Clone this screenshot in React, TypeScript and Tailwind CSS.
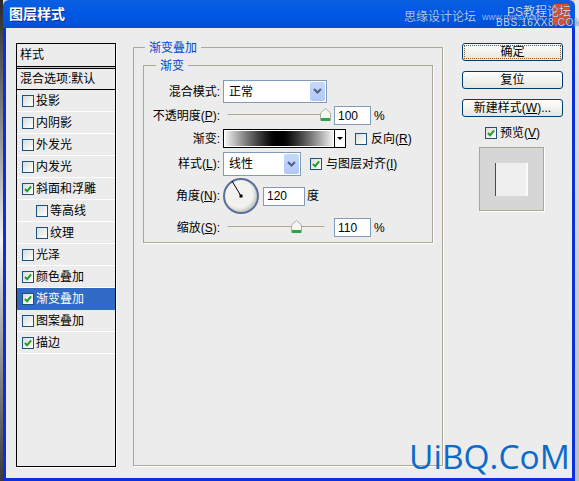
import type { ReactNode } from 'react'

const CJK = 'font-["Liberation_Sans","Noto_Sans_CJK_SC",sans-serif]'

function Check({ on }: { on?: boolean }) {
  return (
    <span className="flex h-[12px] w-[12px] shrink-0 items-center justify-center border border-[#1c5180] bg-gradient-to-br from-[#dcdcd6] to-white">
      {on && (
        <svg width="8" height="8" viewBox="0 0 9 9">
          <path d="M1 4.5 L3.5 7 L8 1.5" fill="none" stroke="#21a121" strokeWidth="2.2" />
        </svg>
      )}
    </span>
  )
}

function ListRow({ label, on, indent, active }: { label: string; on?: boolean; indent?: boolean; active?: boolean }) {
  return (
    <div className={`flex h-[22px] items-center gap-[2px] border-b border-white ${indent ? 'pl-[19px]' : 'pl-[5px]'} ${active ? 'border-b-0 bg-[#316ac5] text-white' : ''}`}>
      <Check on={on} />
      <span>{label}</span>
    </div>
  )
}

function Combo({ value, w, h }: { value: string; w: string; h: string }) {
  return (
    <div className={`flex items-center justify-between border border-[#7f9db9] bg-white p-px pl-[5px] ${w} ${h}`}>
      <span>{value}</span>
      <span className="flex h-full w-[15px] items-center justify-center rounded-[2px] bg-gradient-to-b from-[#c8d8f8] to-[#b1c8f6]">
        <svg width="9" height="7" viewBox="0 0 9 7">
          <path d="M1 1 L4.5 4.5 L8 1" fill="none" stroke="#4d6185" strokeWidth="2" />
        </svg>
      </span>
    </div>
  )
}

function Slider({ pos }: { pos: number }) {
  return (
    <div className="relative mx-[4px] h-[3px] w-[98px] rounded-full border-t border-[#aca899] bg-[#f1efe2]">
      <svg className="absolute top-[-7px]" style={{ left: pos - 5 }} width="11" height="13" viewBox="0 0 11 13">
        <path d="M0.5 5 L5.5 0.5 L10.5 5 V12.5 H0.5 Z" fill="#f6f6f0" stroke="#9fb5a3" />
        <rect x="1" y="10" width="9" height="3" fill="#2fa34a" />
      </svg>
    </div>
  )
}

function NumBox({ value, w }: { value: string; w: string }) {
  return <div className={`flex h-[19px] items-center border border-[#7f9db9] bg-white pl-[3px] ${w}`}>{value}</div>
}

function FormRow({ label, className, children }: { label: ReactNode; className: string; children: ReactNode }) {
  return (
    <div className={`flex items-center ${className}`}>
      <div className="w-[76px] whitespace-nowrap text-right">{label}</div>
      <div className="ml-[3px] flex items-center">{children}</div>
    </div>
  )
}

function Btn({ children, focus }: { children: ReactNode; focus?: boolean }) {
  return (
    <button className="h-[18px] w-[101px] rounded-[3px] border border-[#003c74] bg-gradient-to-b from-white to-[#e6e5dc] p-px leading-none text-black">
      <span className={`flex h-full items-center justify-center ${focus ? 'border border-dotted border-[#8a5a20]' : ''}`}>{children}</span>
    </button>
  )
}

export default function App() {
  return (
    <div className={`relative flex h-[481px] w-[579px] overflow-hidden bg-[#d8d8d8] text-[12px] text-black ${CJK}`}>
      {/* desktop behind the dialog */}
      <div className="w-[3px] shrink-0 bg-gradient-to-b from-[#2a2a2a] via-[#f2f2f2] to-[#3a3a3a]" />
      <div className="flex w-[572px] shrink-0 flex-col">
        <div className="relative h-[28px] shrink-0 rounded-t-[6px] bg-gradient-to-b from-[#0a5fe0] via-[#0058e6] to-[#0450d4]">
          <span className="absolute left-[6px] top-[5px] text-[14px] leading-[18px] font-bold text-white [text-shadow:1px_1px_0_#0a2f8f]">图层样式</span>
          <span className="absolute left-[401px] top-[9px] text-[12px] leading-[16px] text-[#a8c8f4] [text-shadow:0_0_1px_#0a2f8f]">思缘设计论坛</span>
          <span className="absolute left-[479px] top-[12px] text-[9px] leading-[10px] text-[#8fb8f0]">www.missyuan</span>
          <span className="absolute left-[549px] top-[4px] h-[21px] w-[18px] rounded-[3px] bg-[#d9512e]" />
          <span className="absolute left-[504px] top-[5px] text-[12px] leading-[14px] text-[#c6d8ee] [text-shadow:0_0_1px_#0a2f8f]">PS教程论坛</span>
          <span className="absolute left-[493px] top-[18px] whitespace-nowrap text-[10px] leading-[10px] tracking-[0.6px] text-[#c6d8ee] [text-shadow:0_0_1px_#0a2f8f]">BBS.16XX8.COM</span>
        </div>
        <div className="flex flex-1 border-x-[3px] border-b-[3px] border-[#0831d9] bg-[#ececec]">
          {/* style list */}
          <div className="ml-[10px] mt-[15px] h-[424px] w-[100px] shrink-0 border border-black shadow-[1px_1px_0_#fff]">
            <div className="flex h-[22px] items-center pl-[3px]">样式</div>
            <div className="h-[3px] border-y border-black bg-[#ccc]" />
            <div className="flex h-[21px] items-center border-b border-black pl-[3px]">混合选项:默认</div>
            <ListRow label="投影" />
            <ListRow label="内阴影" />
            <ListRow label="外发光" />
            <ListRow label="内发光" />
            <ListRow label="斜面和浮雕" on />
            <ListRow label="等高线" indent />
            <ListRow label="纹理" indent />
            <ListRow label="光泽" />
            <ListRow label="颜色叠加" on />
            <ListRow label="渐变叠加" on active />
            <ListRow label="图案叠加" />
            <ListRow label="描边" on />
          </div>

          {/* settings */}
          <div className="relative ml-[17px] mt-[19px] h-[419px] w-[310px] shrink-0 border border-[#aca899] px-[9px] pt-[17px] shadow-[1px_1px_0_#fff]">
            <span className="absolute left-[11px] top-[-9px] bg-[#ececec] px-[4px] text-[#0046d5]">渐变叠加</span>
            <div className="relative h-[178px] border border-[#aca899] pt-[14px] shadow-[1px_1px_0_#fff]">
              <span className="absolute left-[12px] top-[-9px] bg-[#ececec] px-[4px] text-[#0046d5]">渐变</span>
              <FormRow label="混合模式:" className="h-[23px]">
                <Combo value="正常" w="w-[104px]" h="h-[23px]" />
              </FormRow>
              <FormRow label={<>不透明度(<u>P</u>):</>} className="mt-[3px] h-[19px]">
                <Slider pos={98} />
                <div className="ml-[5px] flex items-center gap-[3px]">
                  <NumBox value="100" w="w-[37px]" />
                  <span>%</span>
                </div>
              </FormRow>
              <FormRow label="渐变:" className="mt-[4px] h-[19px]">
                <div className="flex h-[19px] w-[123px] border border-black bg-white">
                  <div className="w-[110px] border border-white bg-gradient-to-r from-[#f4f4f4] via-black to-[#f4f4f4]" />
                  <div className="flex flex-1 items-center justify-center border-l border-black">
                    <span className="h-0 w-0 border-x-[3px] border-t-[3px] border-x-transparent border-t-black" />
                  </div>
                </div>
                <div className="ml-[9px] flex items-center gap-[4px]">
                  <Check />
                  <span>反向(<u>R</u>)</span>
                </div>
              </FormRow>
              <FormRow label={<>样式(<u>L</u>):</>} className="mt-[4px] h-[24px]">
                <Combo value="线性" w="w-[78px]" h="h-[24px]" />
                <div className="ml-[9px] flex items-center gap-[4px]">
                  <Check on />
                  <span>与图层对齐(<u>I</u>)</span>
                </div>
              </FormRow>
              <FormRow label={<>角度(<u>N</u>):</>} className="mt-[1px] h-[38px]">
                <div className="relative h-[36px] w-[36px] rounded-full border-2 border-[#5a6f9c] bg-[#f2f2ee] shadow-[inset_-2px_-2px_3px_#c8c8c0]">
                  <svg className="absolute inset-0" width="32" height="32" viewBox="0 0 32 32">
                    <line x1="16" y1="16" x2="7" y2="1" stroke="#000" />
                    <rect x="14.5" y="14.5" width="3" height="3" fill="#000" />
                  </svg>
                </div>
                <div className="ml-[4px] flex items-center gap-[2px]">
                  <NumBox value="120" w="w-[42px]" />
                  <span>度</span>
                </div>
              </FormRow>
              <FormRow label={<>缩放(<u>S</u>):</>} className="mt-[3px] h-[19px]">
                <Slider pos={69} />
                <div className="ml-[5px] flex items-center gap-[3px]">
                  <NumBox value="110" w="w-[37px]" />
                  <span>%</span>
                </div>
              </FormRow>
            </div>
          </div>

          {/* buttons */}
          <div className="ml-[19px] mt-[15px] flex w-[101px] shrink-0 flex-col items-center">
            <Btn focus>确定</Btn>
            <div className="mt-[10px]"><Btn>复位</Btn></div>
            <div className="mt-[10px]"><Btn>新建样式(<u>W</u>)...</Btn></div>
            <div className="mt-[7px] flex items-center gap-[3px]">
              <Check on />
              <span>预览(<u>V</u>)</span>
            </div>
            <div className="mr-[2px] mt-[5px] flex h-[64px] w-[65px] items-center justify-center border border-[#aca899] bg-[#d6d6d6] shadow-[1px_1px_0_#fff]">
              <div className="h-[33px] w-[33px] border-l-[1px] border-r-2 border-l-[#4a4a4a] border-r-[#fafafa] bg-[#efefef]" />
            </div>
          </div>
        </div>
      </div>
      <div className="flex-1 bg-gradient-to-b from-[#e8e8e8] to-[#bdbdbd]" />

      {/* watermark */}
      <span className='absolute left-[409px] top-[434px] font-["Open_Sans",sans-serif] text-[33.5px] leading-[44px] text-[#0b6bcb]'>UiBQ.CoM</span>
    </div>
  )
}
